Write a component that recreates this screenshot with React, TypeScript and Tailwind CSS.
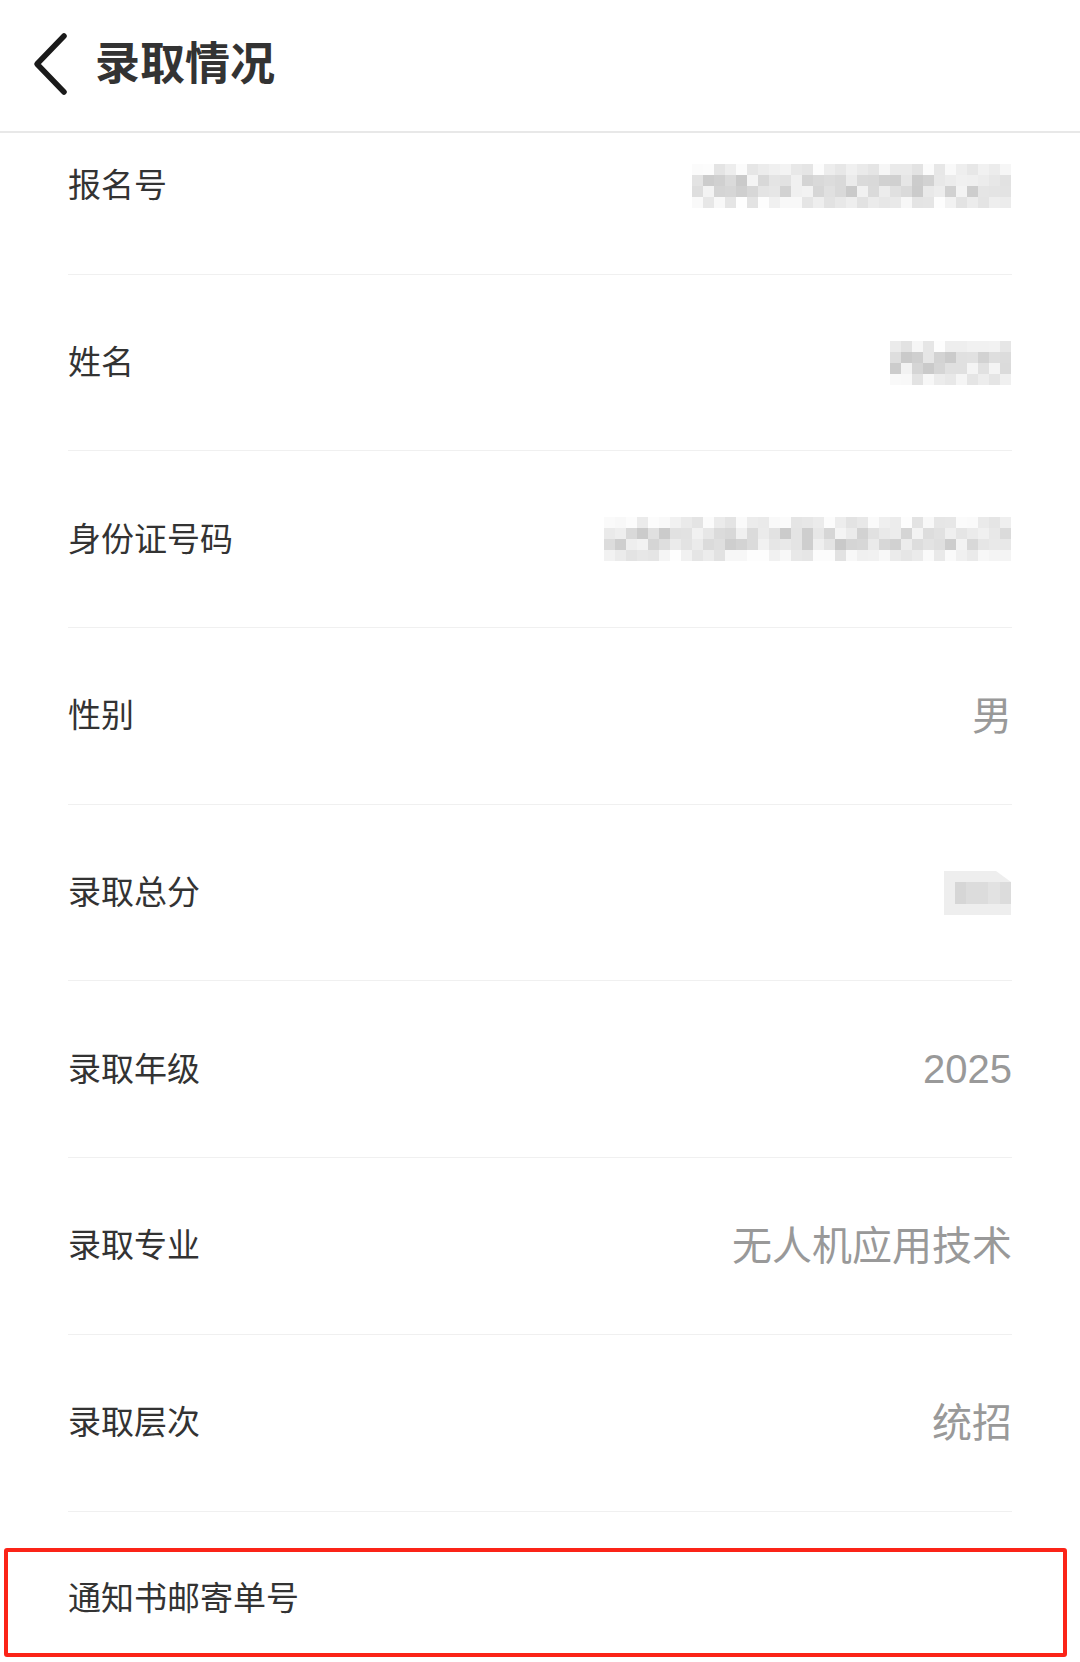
const font = "font-['Liberation_Sans','Noto_Sans_CJK_SC',sans-serif]";

function Pixelated({ cols, rows = 4, seed }: { cols: number; rows?: number; seed: number }) {
  let s = seed;
  const rand = () => {
    s = (s * 9301 + 49297) % 233280;
    return s / 233280;
  };
  const size = 11;
  const cells = [];
  for (let r = 0; r < rows; r++) {
    for (let c = 0; c < cols; c++) {
      const mid = r === 1 || r === 2;
      const v = Math.round((mid ? 200 : 226) + rand() * (mid ? 44 : 28));
      cells.push(
        <rect key={`${r}-${c}`} x={c * size} y={r * size} width={size} height={size} fill={`rgb(${v},${v},${v})`} />
      );
    }
  }
  return (
    <svg width={cols * size} height={rows * size} className="block">
      {cells}
    </svg>
  );
}

function ScoreBlur() {
  return (
    <svg width={67} height={44} className="block">
      <path d="M0 0 H52 L67 11 V44 H0 Z" fill="#eeeeee" />
      <rect x={11} y={11} width={56} height={22} fill="#dcdcdc" />
      <rect x={11} y={11} width={11} height={22} fill="#d6d6d6" />
      <rect x={44} y={11} width={12} height={22} fill="#e2e2e2" />
    </svg>
  );
}

type Row = { label: string; value?: string; blur?: React.ReactNode };

const rows: Row[] = [
  { label: "报名号", blur: <Pixelated cols={29} seed={17} /> },
  { label: "姓名", blur: <Pixelated cols={11} seed={53} /> },
  { label: "身份证号码", blur: <Pixelated cols={37} seed={91} /> },
  { label: "性别", value: "男" },
  { label: "录取总分", blur: <ScoreBlur /> },
  { label: "录取年级", value: "2025" },
  { label: "录取专业", value: "无人机应用技术" },
  { label: "录取层次", value: "统招" },
];

export default function App() {
  return (
    <div className={`h-[1662px] w-[1080px] overflow-hidden bg-white ${font}`}>
      <header className="relative z-10 flex h-[133px] items-center border-b-2 border-[#e8e8e8] bg-white pb-[2px]">
        <svg width="44" height="70" viewBox="0 0 44 70" className="ml-[28px]">
          <path d="M36 6 L9 34 L36 62" fill="none" stroke="#1a1a1a" strokeWidth="5.5" strokeLinecap="round" strokeLinejoin="round" />
        </svg>
        <h1 className="ml-[23px] text-[45px] font-bold leading-none text-[#333333]">录取情况</h1>
      </header>

      <div className="-mt-[35px]">
        {rows.map((row) => (
          <div
            key={row.label}
            className="mx-[68px] flex h-[176.7px] items-center justify-between border-b border-[#f0f0f0]"
          >
            <span className="text-[33px] leading-none text-[#333333]">{row.label}</span>
            {row.blur ? (
              <div className="mr-[1px]">{row.blur}</div>
            ) : (
              <span className="text-[40px] leading-none text-[#999999]">{row.value}</span>
            )}
          </div>
        ))}

        <div className="mr-[13px] ml-[4px] pt-[36px]">
          <div className="flex h-[109px] items-center rounded-[3px] border-[4px] border-[#fb2418] pb-[8px] pl-[60px]">
            <span className="text-[33px] leading-none text-[#333333]">通知书邮寄单号</span>
          </div>
        </div>
      </div>
    </div>
  );
}
